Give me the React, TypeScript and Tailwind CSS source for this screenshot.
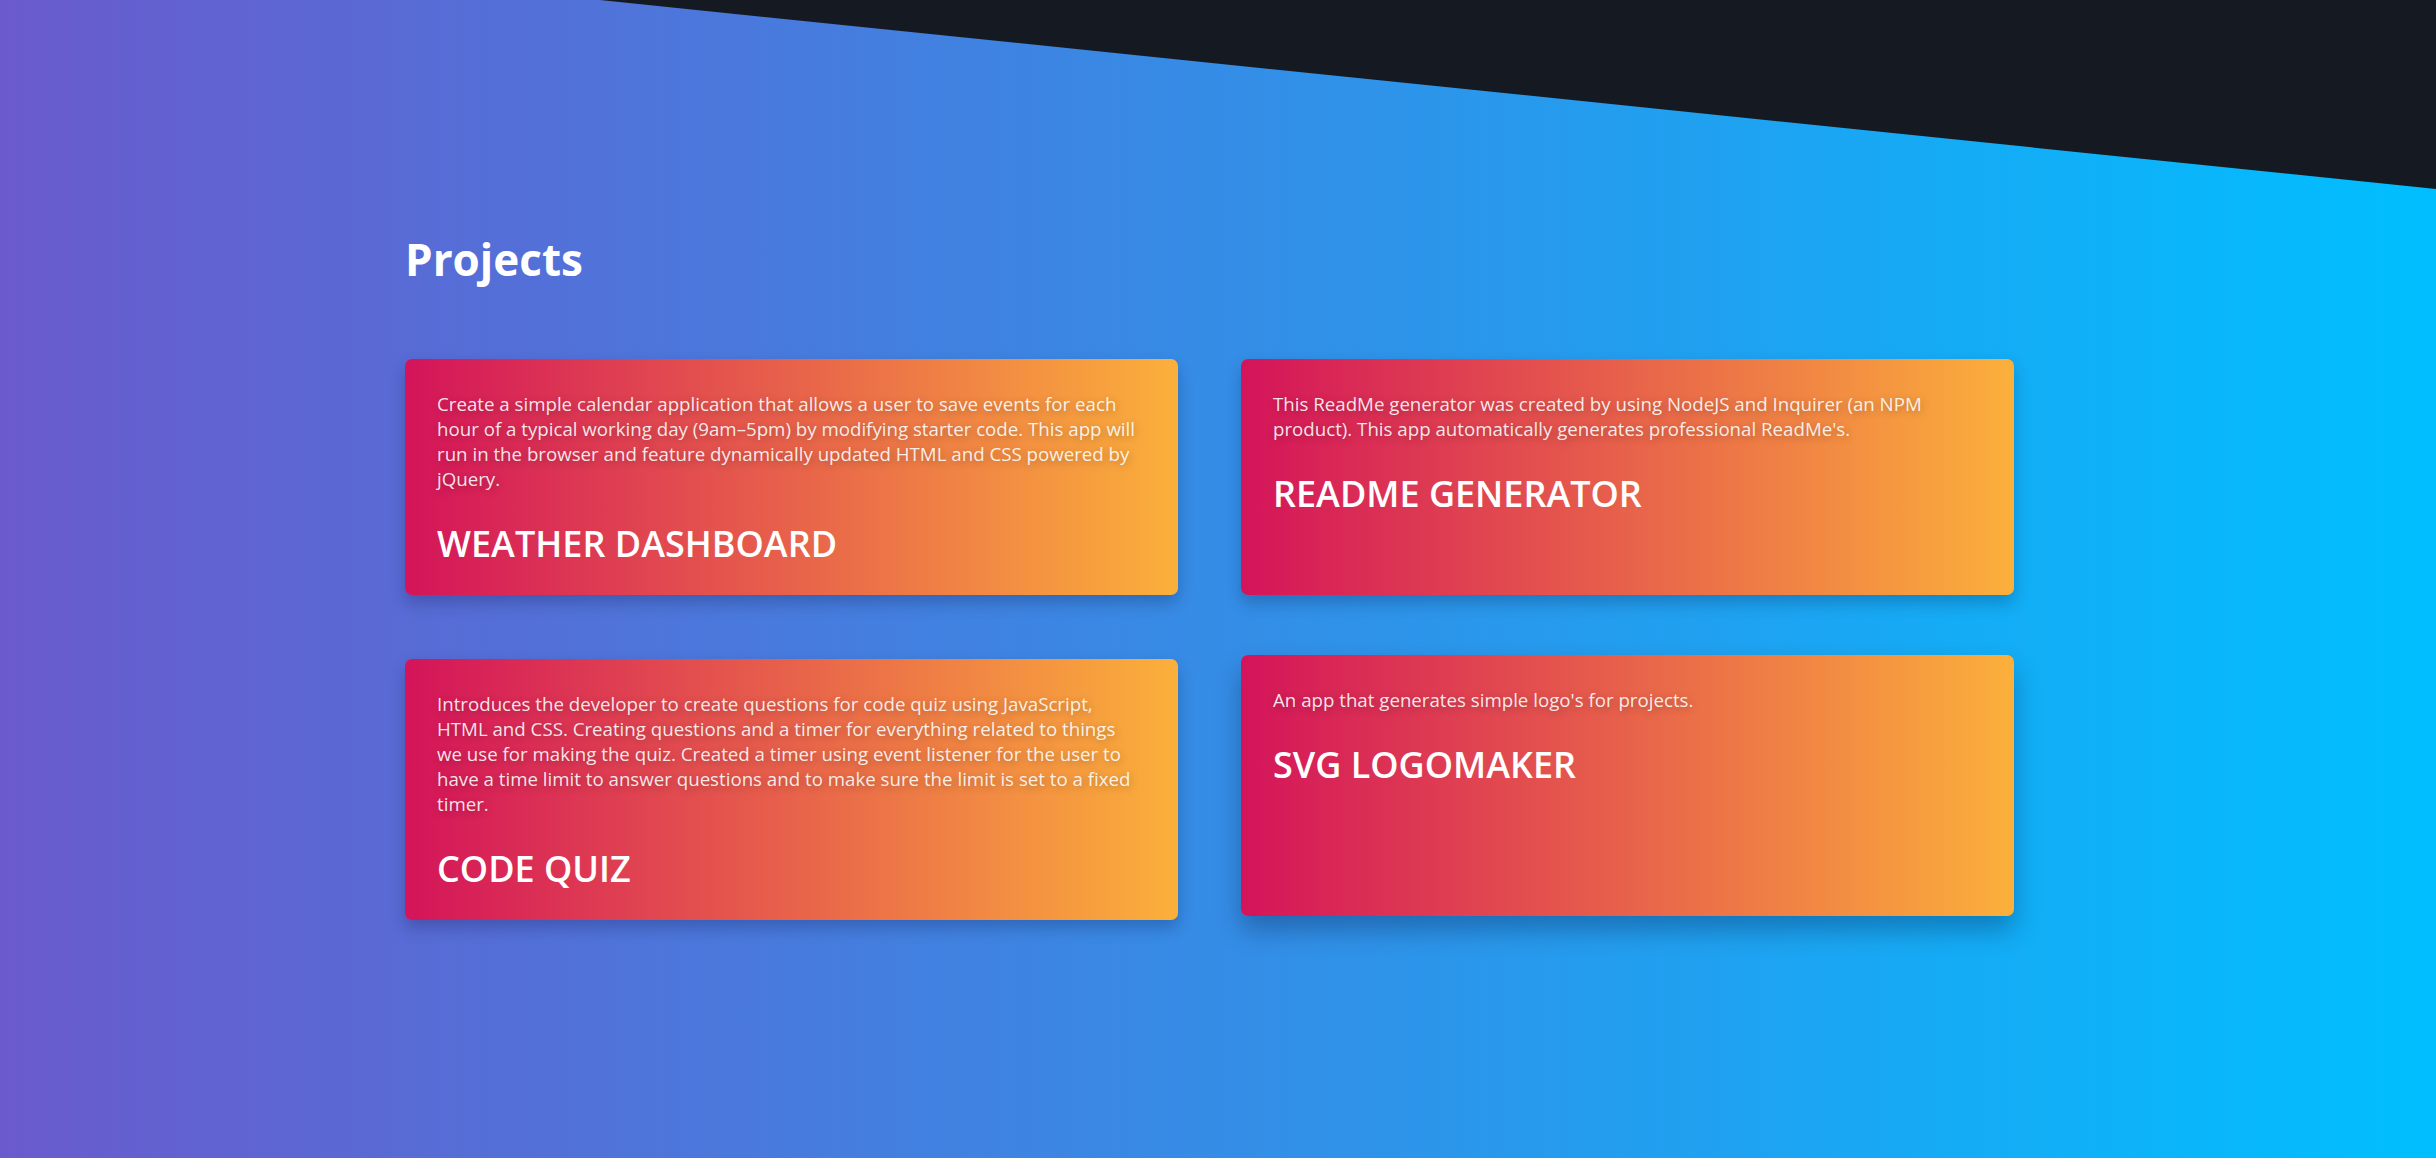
import React from "react";

type Project = { lines: string[]; title: string; hovered?: boolean };

const projects: Project[] = [
  {
    lines: [
      "Create a simple calendar application that allows a user to save events for each",
      "hour of a typical working day (9am–5pm) by modifying starter code. This app will",
      "run in the browser and feature dynamically updated HTML and CSS powered by",
      "jQuery.",
    ],
    title: "WEATHER DASHBOARD",
  },
  {
    lines: [
      "This ReadMe generator was created by using NodeJS and Inquirer (an NPM",
      "product). This app automatically generates professional ReadMe's.",
    ],
    title: "README GENERATOR",
  },
  {
    lines: [
      "Introduces the developer to create questions for code quiz using JavaScript,",
      "HTML and CSS. Creating questions and a timer for everything related to things",
      "we use for making the quiz. Created a timer using event listener for the user to",
      "have a time limit to answer questions and to make sure the limit is set to a fixed",
      "timer.",
    ],
    title: "CODE QUIZ",
  },
  {
    lines: ["An app that generates simple logo's for projects."],
    title: "SVG LOGOMAKER",
    hovered: true,
  },
];

function Card({ p }: { p: Project }) {
  return (
    <div
      className={
        p.hovered
          ? "rounded-[7px] bg-[linear-gradient(to_right,#d4145a,#fbb03b)] px-8 pt-8 pb-8 -translate-y-[4px] shadow-[0_14px_26px_rgba(0,0,40,0.28)]"
          : "rounded-[7px] bg-[linear-gradient(to_right,#d4145a,#fbb03b)] px-8 pt-8 pb-8 shadow-[0_8px_16px_rgba(0,0,40,0.22)]"
      }
    >
      <p className="text-[18.7px] leading-[25px] text-white/[0.88] [text-shadow:1px_2px_8px_rgba(0,0,0,0.28)]">
        {p.lines.map((l, i) => (
          <span key={i} className="block whitespace-nowrap">
            {l}
          </span>
        ))}
      </p>
      <h3 className="mt-[34px] text-[36px] leading-[38px] font-semibold text-white">
        {p.title}
      </h3>
    </div>
  );
}

export default function App() {
  return (
    <div className="relative min-h-screen w-full overflow-hidden bg-[linear-gradient(to_right,#6a5acd,#00bfff)] font-['Open_Sans',sans-serif]">
      <div className="absolute inset-x-0 top-0 h-[189px] bg-[#151a22] [clip-path:polygon(600px_0,100%_0,100%_100%)]" />
      <div className="relative pl-[405px] pt-[233px] pb-[120px]">
        <h2 className="text-[44px] leading-[53px] font-bold text-white">Projects</h2>
        <div className="mt-[73px] grid w-[1610px] grid-cols-[773px_773px] gap-x-[63px] gap-y-[64px]">
          {projects.map((p) => (
            <Card key={p.title} p={p} />
          ))}
        </div>
      </div>
    </div>
  );
}
